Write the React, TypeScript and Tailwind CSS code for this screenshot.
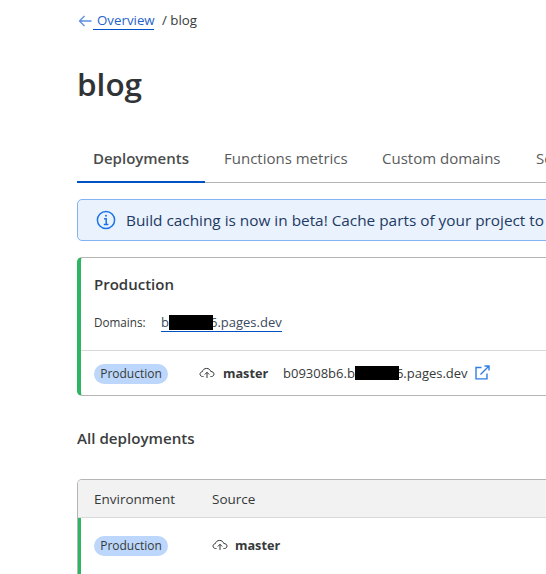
import React from "react";

const Cloud = () => (
  <svg width="16" height="16" viewBox="0 0 16 16" fill="none" stroke="#36393a" strokeWidth="1" className="shrink-0">
    <path d="M4.500 10.500H3.600C2.100 10.500 1 9.400 1 8.100c0-1.300 1-2.300 2.300-2.400C3.700 3.800 5.400 2.400 7.600 2.400c2 0 3.700 1.300 4.200 3.100 1.700 0 3.200 1 3.200 2.600 0 1.400-1.100 2.400-2.600 2.400h-1" />
    <path d="M8 12V6.300M5.800 8.500l2.200-2.200 2.200 2.200" />
  </svg>
);

const Badge = () => (
  <span className="inline-flex items-center justify-center w-[74px] h-[20px] rounded-full bg-[#bcd7fb] text-[12px] text-[#36393a]">Production</span>
);

export default function App() {
  return (
    <div className="w-[546px] h-[574px] overflow-hidden bg-white text-[#36393a] font-['Open_Sans','Noto_Sans',sans-serif]">
      <div className="w-[700px] pl-[77px]">
        <div className="h-[40px] pt-[10px] flex items-start text-[13.300px] leading-[20px]">
          <svg width="14" height="14" viewBox="0 0 14 14" fill="none" stroke="#5c8fe0" strokeWidth="1.300" className="mt-[4px] ml-[1px] shrink-0">
            <path d="M13.500 7H1.500M6.500 2 1.500 7l5 5" />
          </svg>
          <a className="ml-[1px] pl-[4px] w-[61px] h-[20px] border-b border-[#0051c3] text-[#2563c9]">Overview</a>
          <span className="ml-[8px]">/ blog</span>
        </div>
        <h1 className="mt-[20px] h-[48px] text-[31.500px] leading-[48px] font-semibold text-[#313436]">blog</h1>
        <div className="mt-[25px] h-[50px] w-[623px] flex border-b border-[#b5b5b5] text-[15px] text-[#595b5c]">
          <div className="w-[128px] h-[50px] border-b-2 border-[#0051c3] flex items-center justify-center font-semibold text-[#4a4c4d] pt-[2px]">Deployments</div>
          <div className="ml-[19px] w-[138px] flex items-center pt-[1px]">Functions metrics</div>
          <div className="ml-[20px] w-[154px] flex items-center pt-[1px]">Custom domains</div>
          <div className="flex items-center pt-[1px]">Settings</div>
        </div>
        <div className="mt-[16px] w-[623px] h-[42px] rounded-[5px] border border-[#82b3f5] bg-[#eaf2fe] flex items-center pl-[18px] pt-[1px] text-[15.350px] text-[#1d3a63]">
          <svg width="20" height="20" viewBox="0 0 20 20" fill="none" stroke="#1a73e8" strokeWidth="1.500" className="shrink-0 -mt-[1px]">
            <circle cx="10" cy="10" r="8.600" />
            <path d="M8 8.800h2.200v5.400M7.800 14.400h4.600" />
            <circle cx="10" cy="5.800" r="1" fill="#1a73e8" stroke="none" />
          </svg>
          <span className="ml-[10px] whitespace-nowrap">Build caching is now in beta! Cache parts of your project to speed up builds.</span>
        </div>
        <div className="mt-[16px] w-[623px] h-[139px] rounded-[5px] border border-[#b5b5b5] border-l-4 border-l-[#2fb464] overflow-hidden">
          <div className="h-[93px] border-b border-[#d9d9d9] pl-[13px] pt-[15px]">
            <div className="text-[15px] leading-[22px] font-semibold">Production</div>
            <div className="mt-[17px] flex items-center text-[11.700px] leading-[20px]">
              <span className="w-[67px]">Domains:</span>
              <a className="w-[121px] h-[20px] border-b border-[#0051c3] text-[13px] text-[#3a4a60] whitespace-nowrap">b<span className="relative inline-block w-[44px] h-[15px] -mr-[3px] bg-black align-[-3px]" />6.pages.dev</a>
            </div>
          </div>
          <div className="h-[44px] flex items-center pl-[13px] pt-[1px] text-[13px]">
            <Badge />
            <span className="ml-[31px]"><Cloud /></span>
            <span className="ml-[8px] w-[60px] text-[12.700px] font-bold">master</span>
            <span className="whitespace-nowrap">b09308b6.b<span className="relative inline-block w-[44px] h-[14px] -mr-[3px] bg-black align-[-2px]" />6.pages.dev</span>
            <svg width="15" height="15" viewBox="0 0 15 15" fill="none" stroke="#2f7de1" strokeWidth="1.400" className="ml-[7px] mb-[2px] shrink-0">
              <path d="M6.500 2.500H1v11.400h11V8.500" />
              <path d="M5.500 9.500 14 1M9.500 1H14v4.500" />
            </svg>
          </div>
        </div>
        <div className="mt-[31px] h-[22px] text-[15.150px] leading-[22px] font-semibold text-[#3b3e40]">All deployments</div>
        <div className="mt-[30px] w-[623px] h-[130px] rounded-t-[5px] border border-[#b5b5b5] border-b-0 overflow-hidden">
          <div className="h-[38px] bg-[#f2f2f2] border-b border-[#d9d9d9] flex items-center pl-[16px] pt-[1px] text-[13.500px] font-medium">
            <span className="w-[118px]">Environment</span>
            <span>Source</span>
          </div>
          <div className="h-[57px] -ml-px border-l-4 border-l-[#2fb464] flex items-center pl-[13px] pb-[2px] text-[12.700px]">
            <Badge />
            <span className="ml-[44px]"><Cloud /></span>
            <span className="ml-[7px] font-bold">master</span>
          </div>
        </div>
      </div>
    </div>
  );
}
